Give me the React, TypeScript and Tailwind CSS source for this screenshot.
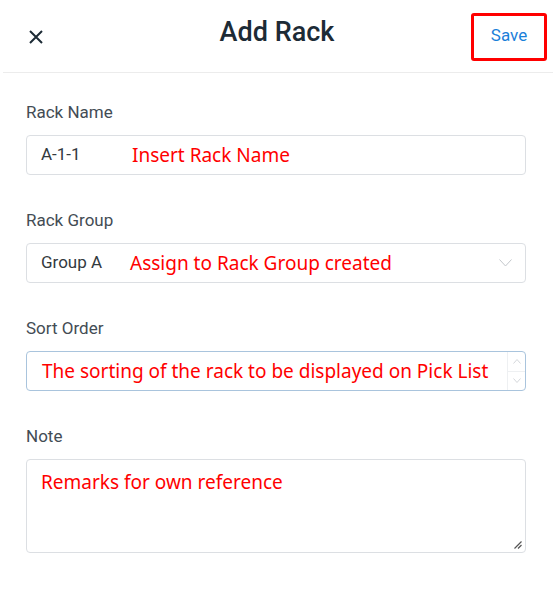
import React from "react";

const ROBOTO = "font-['Roboto',_'Liberation_Sans',_sans-serif]";
const NOTE = "font-['Noto_Sans',_'DejaVu_Sans',_sans-serif] text-[19px] text-[#ff0000]";

function Label({ children }: { children: React.ReactNode }) {
  return <div className="mb-[11px] h-6 text-[17px] leading-6 text-[#434c54]">{children}</div>;
}

export default function App() {
  return (
    <div className={`${ROBOTO} h-[614px] w-[553px] bg-white`}>
      {/* header */}
      <div className="relative ml-[3px] flex h-[73px] items-center border-b border-[#ececec]">
        <button className="ml-[26px] mt-[1px] flex h-[14px] w-[14px] items-center justify-center">
          <svg width="14" height="14" viewBox="0 0 14 14" fill="none" stroke="#1d2b36" strokeWidth="2">
            <path d="M1 1l12 12M13 1L1 13" />
          </svg>
        </button>
        <h1 className="pointer-events-none absolute left-0 right-0 top-[14px] pr-[2px] text-center text-[27px] font-medium leading-9 text-[#1d2b36]">
          Add Rack
        </h1>
        <button className="ml-auto mr-[6px] mt-[2px] flex h-[48px] w-[76px] items-center justify-center rounded-[3px] border-[3px] border-[#ff0000] pb-[2px] text-[17px] text-[#1a80d9]">
          Save
        </button>
      </div>

      {/* form */}
      <div className="flex flex-col gap-[33px] pl-[26px] pr-[27px] pt-[27px]">
        <div>
          <Label>Rack Name</Label>
          <div className="flex h-10 items-center rounded-[4px] border border-[#dcdfe3] pl-[14px]">
            <span className="w-[91px] text-[17px] text-[#33393e]">A-1-1</span>
            <span className={NOTE}>Insert Rack Name</span>
          </div>
        </div>

        <div>
          <Label>Rack Group</Label>
          <div className="flex h-10 items-center rounded-[4px] border border-[#dcdfe3] pl-[14px] pr-[13px]">
            <span className="w-[89px] text-[17px] text-[#33393e]">Group A</span>
            <span className={NOTE}>Assign to Rack Group created</span>
            <svg className="ml-auto" width="13" height="8" viewBox="0 0 13 8" fill="none" stroke="#c3c7cc" strokeWidth="1">
              <path d="M0.5 0.5l6 6.5 6-6.5" />
            </svg>
          </div>
        </div>

        <div>
          <Label>Sort Order</Label>
          <div className="flex h-10 items-stretch rounded-[4px] border border-[#a9c4dd] pl-[15px]">
            <span className={`${NOTE} flex flex-1 items-center`}>The sorting of the rack to be displayed on Pick List</span>
            <div className="flex w-[18px] flex-col border-l border-[#eef0f2]">
              <div className="flex flex-1 items-center justify-center border-b border-[#eef0f2]">
                <svg width="8" height="5" viewBox="0 0 8 5" fill="none" stroke="#d4d7db" strokeWidth="1">
                  <path d="M0.5 4.5l3.5-4 3.5 4" />
                </svg>
              </div>
              <div className="flex flex-1 items-center justify-center">
                <svg width="8" height="5" viewBox="0 0 8 5" fill="none" stroke="#d4d7db" strokeWidth="1">
                  <path d="M0.5 0.5l3.5 4 3.5-4" />
                </svg>
              </div>
            </div>
          </div>
        </div>

        <div>
          <Label>Note</Label>
          <div className="relative h-[94px] rounded-[4px] border border-[#dcdfe3] pl-[14px] pt-[8px]">
            <span className={NOTE}>Remarks for own reference</span>
            <svg className="absolute bottom-[3px] right-[3px]" width="9" height="9" viewBox="0 0 9 9" fill="none" stroke="#555" strokeWidth="1.2">
              <path d="M8.5 1.5L1.5 8.5M8.5 5L5 8.5" />
            </svg>
          </div>
        </div>
      </div>
    </div>
  );
}
